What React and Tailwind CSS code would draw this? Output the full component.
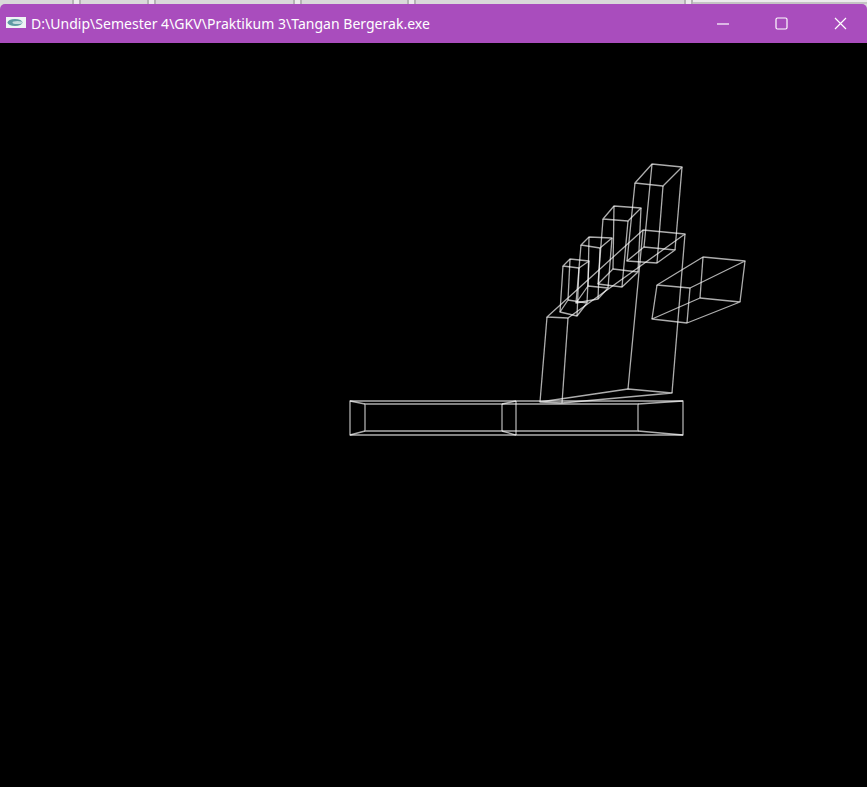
const polys = [
  // base
  [[350, 401], [683, 401], [683, 435], [350, 435]],
  [[365, 404], [638, 404], [638, 431], [365, 431]],
  // palm
  [[547, 317], [568, 318], [685, 234], [643, 230]],
  [[540, 402], [562, 403], [672, 393], [628, 389]],
  // big finger
  [[652, 164], [682, 167], [663, 186], [635, 183]],
  [[627, 261], [657, 263], [675, 250], [644, 247]],
  // second finger
  [[614, 206], [641, 208], [628, 221], [603, 219]],
  [[598, 284], [622, 287], [638, 272], [613, 269]],
  // third finger
  [[589, 237], [612, 238], [600, 248], [581, 245]],
  [[576, 303], [598, 299], [608, 288], [588, 286]],
  // small finger
  [[570, 259], [589, 261], [579, 268], [563, 266]],
  [[560, 312], [577, 316], [587, 303], [568, 300]],
  // thumb
  [[657, 285], [703, 257], [745, 261], [690, 288]],
  [[652, 319], [687, 323], [740, 302], [700, 298]],
];

const edges = [
  [350, 401, 365, 404], [350, 435, 365, 431], [683, 401, 638, 404], [683, 435, 638, 431],
  [502, 404, 502, 431], [516, 401, 516, 435], [502, 404, 516, 401], [502, 431, 516, 435],
  [547, 317, 540, 402], [568, 318, 562, 403], [685, 234, 672, 393], [643, 230, 628, 389],
  [635, 183, 627, 261], [663, 186, 657, 263], [682, 167, 675, 250], [652, 164, 644, 247],
  [603, 219, 598, 284], [628, 221, 622, 287], [641, 208, 638, 272], [614, 206, 613, 269],
  [581, 245, 576, 303], [600, 248, 598, 299], [612, 238, 608, 288], [589, 237, 588, 286],
  [563, 266, 560, 312], [579, 268, 577, 316], [589, 261, 587, 303], [570, 259, 568, 300],
  [657, 285, 652, 319], [690, 288, 687, 323], [745, 261, 740, 302], [703, 257, 700, 298],
];

const Gap = () => <div className="w-[9px] shrink-0 bg-[#ececec] border-x-2 border-[#b4b4b4]"></div>;

export default function App() {
  return (
    <div className="w-[867px] h-[787px] flex flex-col bg-[#d9d9d9] overflow-hidden">
      {/* window behind */}
      <div className="h-1 flex shrink-0">
        <div className="w-[72px]"></div>
        <Gap />
        <div className="w-[66px]"></div>
        <Gap />
        <div className="w-[137px]"></div>
        <Gap />
        <div className="w-[105px]"></div>
        <Gap />
        <div className="w-[268px]"></div>
        <Gap />
        <div className="flex-1 bg-[#ececec] border-b-2 border-[#c4c4c4]"></div>
      </div>

      <div className="h-[39px] shrink-0 bg-[#a94dbd] rounded-t-[5px] flex items-center text-white" style={{ fontFamily: '"Noto Sans", sans-serif' }}>
        <svg width="20" height="11" viewBox="0 0 20 11" className="ml-[6px] mr-[5px] mb-[3px]">
          <rect width="20" height="11" fill="#eef4f4" />
          <ellipse cx="9" cy="5.5" rx="7.5" ry="3.5" fill="#5d9aa3" />
          <ellipse cx="11.5" cy="5.5" rx="5" ry="1.5" fill="#c3dcde" />
        </svg>
        <span className="text-[14px] tracking-[0.02px] whitespace-nowrap">D:\Undip\Semester 4\GKV\Praktikum 3\Tangan Bergerak.exe</span>
        <div className="ml-auto flex items-center gap-[46px] mr-[20px]">
          <svg width="12" height="2" viewBox="0 0 12 2"><path d="M0 1H12" stroke="#fff" strokeWidth="1.2" /></svg>
          <svg width="13" height="13" viewBox="0 0 13 13"><rect x="1" y="1" width="11" height="11" rx="1.5" fill="none" stroke="#fff" strokeWidth="1.2" /></svg>
          <svg width="13" height="13" viewBox="0 0 13 13"><path d="M1 1L12 12M12 1L1 12" stroke="#fff" strokeWidth="1.2" /></svg>
        </div>
      </div>

      {/* opengl output */}
      <div className="flex-1 bg-black">
        <svg width="867" height="744" viewBox="0 43 867 744" className="block">
          <g fill="none" stroke="#fff" strokeWidth="1.3" strokeOpacity="0.68" strokeLinejoin="round">
            {polys.map((p, i) => (
              <polygon key={i} points={p.map(q => q.join(',')).join(' ')} />
            ))}
            {edges.map((e, i) => (
              <line key={i} x1={e[0]} y1={e[1]} x2={e[2]} y2={e[3]} />
            ))}
          </g>
        </svg>
      </div>
    </div>
  );
}
